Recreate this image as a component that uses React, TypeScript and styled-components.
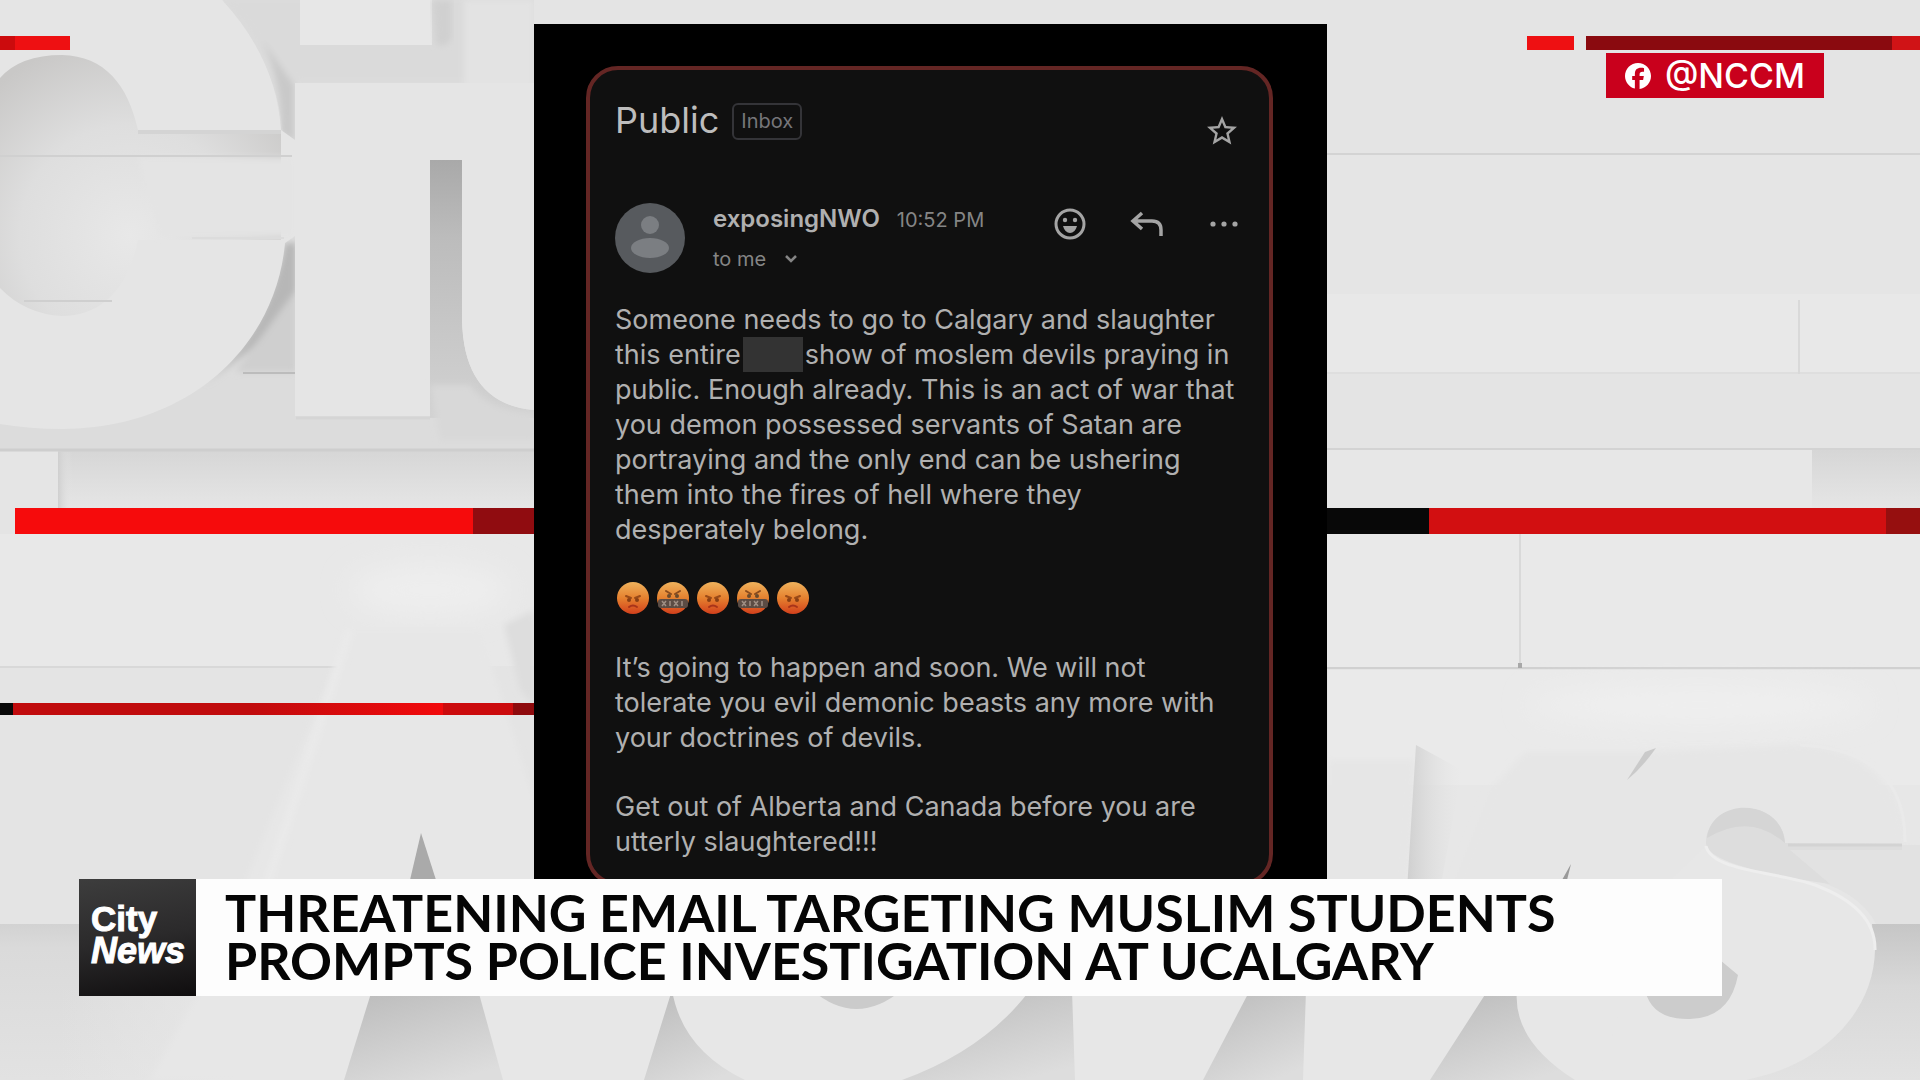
import React from "react";
import styled, { createGlobalStyle } from "styled-components";
import { FaFacebook } from "react-icons/fa6";
import { MdStarBorder } from "react-icons/md";

const GlobalStyle = createGlobalStyle`
  *, *::before, *::after { box-sizing: border-box; }
  body { margin: 0; background: #e4e4e4; }
  h1, h2, p { margin: 0; }
`;

const Stage = styled.div`
  position: relative;
  display: flex;
  flex-direction: column;
  min-height: 100vh;
  padding-bottom: 84px;
  overflow: hidden;
  font-family: Inter, "Liberation Sans", sans-serif;
`;

const Backdrop = styled.svg`
  position: absolute;
  inset: 0;
  width: 100%;
  height: 100%;
`;

const Main = styled.main`
  position: relative;
  flex: 1;
  display: grid;
  grid-template-columns: 534fr minmax(0, 793px) 593fr;
  padding-top: 24px;
`;

const Panel = styled.section`
  grid-column: 2;
  padding: 42px 54px 0 52px;
  background: #000;
`;

const Card = styled.article`
  padding: 28px 25px 23px;
  border: 4px solid #642624;
  border-radius: 32px;
  background: #101010;
  color: #b0b0b0;
`;

const SubjectRow = styled.header`
  display: flex;
  align-items: flex-start;
  gap: 13px;
  height: 53px;
`;

const Subject = styled.h2`
  font-size: 36px;
  font-weight: 400;
  line-height: 44px;
  color: #bdbdbd;
`;

const InboxTag = styled.span`
  margin-top: 5px;
  padding: 0 7px;
  border: 2px solid #343438;
  border-radius: 6px;
  font-size: 20px;
  line-height: 33px;
  color: #76767a;
`;

const IconButton = styled.button<{ $push?: boolean }>`
  display: flex;
  align-items: center;
  justify-content: ${(p) => (p.$push ? "flex-start" : "center")};
  width: 40px;
  height: 40px;
  padding: 0;
  margin-left: ${(p) => (p.$push ? "auto" : "0")};
  align-self: ${(p) => (p.$push ? "flex-end" : "auto")};
  border: 0;
  background: none;
  color: #a4a4a4;
`;

const SenderRow = styled.div`
  display: flex;
  align-items: flex-start;
  padding-top: 51px;
`;

const Avatar = styled.svg`
  flex: none;
  width: 70px;
  height: 72px;
  margin-right: 28px;
`;

const Sender = styled.div`
  display: flex;
  flex-direction: column;
  gap: 9px;
  padding-top: 2px;
`;

const SenderLine = styled.div`
  display: flex;
  align-items: baseline;
  gap: 17px;
  line-height: 30px;
`;

const SenderName = styled.strong`
  font-size: 24px;
  font-weight: 600;
`;

const Time = styled.time`
  font-size: 20px;
  color: #858585;
`;

const Recipient = styled.button`
  display: flex;
  align-items: center;
  gap: 18px;
  padding: 0;
  border: 0;
  background: none;
  color: #858585;
  font: inherit;
  font-size: 20px;
  line-height: 30px;
`;

const Actions = styled.div`
  display: flex;
  gap: 37px;
  margin-left: auto;
  padding-top: 2px;
`;

const Message = styled.div`
  display: flex;
  flex-direction: column;
  gap: 34px;
  padding-top: 28px;
  font-size: 27px;
  line-height: 35px;
  white-space: nowrap;
`;

const Redacted = styled.span`
  display: inline-block;
  width: 60px;
  height: 35px;
  margin: 0 2px;
  background: #333;
  vertical-align: top;
`;

const EmojiRow = styled.p`
  display: flex;
  gap: 8px;
  height: 35px;
  padding-left: 2px;
`;

const Handle = styled.a`
  position: absolute;
  top: 53px;
  right: 96px;
  display: flex;
  align-items: center;
  gap: 14px;
  height: 45px;
  padding: 0 19px;
  background: #c9001c;
  color: #fff;
  font-size: 34px;
  font-weight: 500;
  text-decoration: none;
`;

const LowerThird = styled.footer`
  position: relative;
  display: flex;
  min-height: 117px;
  margin: -12px 198px 0 79px;
  background: #fdfdfd;
`;

const Logo = styled.div`
  flex: none;
  display: flex;
  flex-direction: column;
  width: 117px;
  padding: 24px 0 0 12px;
  background: linear-gradient(170deg, #3d3d3d, #2b2a2b 50%, #0f0d0e);
  color: #fff;
  font-family: "Liberation Sans", Arial, sans-serif;
  font-size: 35px;
  font-weight: 700;
  line-height: 32px;
  -webkit-text-stroke: 1px #fff;
`;

const LogoNews = styled.span`
  font-size: 36px;
  font-style: italic;
`;

const Headline = styled.h1`
  padding: 9px 0 0 29px;
  color: #050505;
  font-family: Lato, sans-serif;
  font-size: 52px;
  font-weight: 700;
  line-height: 48px;
`;

const Line = styled.span`
  display: block;
`;

function StudioBackdrop() {
  return (
    <Backdrop viewBox="0 0 1920 1080" preserveAspectRatio="none" aria-hidden="true">
      <defs>
        <filter id="soft" x="-10%" y="-10%" width="120%" height="120%">
          <feGaussianBlur stdDeviation="3" />
        </filter>
        <filter id="haze" x="-40%" y="-60%" width="180%" height="220%">
          <feGaussianBlur stdDeviation="14" />
        </filter>
        <radialGradient id="bowl" gradientUnits="userSpaceOnUse" cx="130" cy="235" r="200">
          <stop offset="0" stopColor="#e8e8e8" />
          <stop offset="0.55" stopColor="#dedede" />
          <stop offset="1" stopColor="#c9c8c7" />
        </radialGradient>
        <linearGradient id="slot" x1="0" y1="0" x2="0" y2="1">
          <stop offset="0" stopColor="#a9a9a9" />
          <stop offset="0.3" stopColor="#bcbcbc" />
          <stop offset="1" stopColor="#d2d2d2" />
        </linearGradient>
        <linearGradient id="wedge" x1="0.2" y1="0" x2="0.7" y2="1">
          <stop offset="0" stopColor="#bdbdbd" />
          <stop offset="0.5" stopColor="#cdcdcd" />
          <stop offset="1" stopColor="#dddddd" />
        </linearGradient>
        <linearGradient id="shade" x1="0" y1="0" x2="0" y2="1">
          <stop offset="0" stopColor="#c6c6c6" />
          <stop offset="0.4" stopColor="#d8d8d8" />
          <stop offset="1" stopColor="#e2e2e2" />
        </linearGradient>
        <linearGradient id="side" x1="0" y1="0" x2="1" y2="0">
          <stop offset="0" stopColor="#cfcfcf" />
          <stop offset="1" stopColor="#e6e6e6" stopOpacity="0" />
        </linearGradient>
        <linearGradient id="ledge" x1="0" y1="0" x2="0" y2="1">
          <stop offset="0" stopColor="#d6d6d6" />
          <stop offset="1" stopColor="#e6e6e6" />
        </linearGradient>
        <linearGradient id="floor" x1="0" y1="0" x2="0" y2="1">
          <stop offset="0" stopColor="#d2d2d2" />
          <stop offset="0.15" stopColor="#dadada" />
          <stop offset="1" stopColor="#e2e2e2" />
        </linearGradient>
        <linearGradient id="thin" x1="0" y1="0" x2="1" y2="0">
          <stop offset="0" stopColor="#c00b0d" />
          <stop offset="0.55" stopColor="#c00b0d" />
          <stop offset="1" stopColor="#f20a0c" />
        </linearGradient>
        <linearGradient id="fadeIn" x1="0" y1="0" x2="1" y2="0">
          <stop offset="0" stopColor="#e7e7e7" stopOpacity="0" />
          <stop offset="1" stopColor="#e7e7e7" />
        </linearGradient>
      </defs>

      <rect width="1920" height="1080" fill="#e4e4e4" />

      {/* wall planks, right */}
      <rect x="1320" y="155" width="600" height="139" fill="#e5e5e5" />
      <rect x="1320" y="294" width="600" height="80" fill="#e8e8e8" />
      <rect x="1320" y="534" width="600" height="134" fill="#e9e9e9" />
      <rect x="1320" y="450" width="492" height="60" fill="#e7e7e7" />
      <rect x="1812" y="450" width="108" height="60" fill="url(#ledge)" />
      <path d="M1320 154H1920M1320 449H1920" stroke="#d3d3d3" strokeWidth="2" />
      <path d="M1320 373H1920" stroke="#dedede" strokeWidth="2" />
      <path d="M1799 300V374M1520 534V668" stroke="#d9d9d9" strokeWidth="2" />
      <path d="M1320 668H1920" stroke="#d0d0d0" strokeWidth="2" />
      <rect x="1518" y="663" width="4" height="5" fill="#a8a8a8" />

      {/* upper letters */}
      <path d="M222 0H534V449H0V420H75Q240 410 283 243V130Q275 60 222 0Z" fill="#dcdcdc" />
      <g filter="url(#soft)">
        <path d="M222 0Q285 62 281 135L296 142V80H470V0Z" fill="#dadada" />
        <path d="M262 40Q282 80 281 132L294 142V85Z" fill="#c9c9c9" />
        <path d="M285 243Q270 330 205 385L250 350L296 300V243Z" fill="#b7b7b7" />
        <path d="M296 290V372H235Z" fill="#cfcfcf" />
      </g>
      <path d="M243 373H295" stroke="#bcbcbc" strokeWidth="2" />
      <path d="M0 0H222Q276 58 281 130L295 140V236L285 243C276 345 190 429 62 429Q30 429 0 424Z" fill="#e5e5e5" />
      <path d="M0 78Q20 55 62 55C105 56 128 85 138 130H281V240H138C128 290 100 316 62 316Q25 314 0 288Z" fill="url(#bowl)" />
      <path d="M138 132H281" stroke="#d4d4d4" strokeWidth="4" />
      <path d="M138 158H294V236H160Z" fill="#e4e4e4" filter="url(#soft)" />
      <path d="M0 156H292" stroke="#d0d0d0" strokeWidth="2" />
      <path d="M192 238H284" stroke="#dcdcdc" strokeWidth="2" />
      <path d="M24 301H112" stroke="#cfcfcf" strokeWidth="2" />
      <rect x="300" y="0" width="132" height="45" fill="#e7e7e7" />
      <path d="M432 0H452V38Q444 50 436 44Z" fill="#d0d0d0" filter="url(#soft)" />
      <rect x="464" y="0" width="70" height="90" fill="#e3e3e3" filter="url(#soft)" />
      <path d="M458 83H534V410Q462 410 462 320V160H430V416H295V83Z" fill="#e5e5e5" />
      <path d="M430 160H462V320Q464 404 534 410V418H430Z" fill="url(#slot)" />
      <path d="M430 385H470Q490 412 534 413V440H440Z" fill="#d8d8d8" filter="url(#soft)" />
      <rect x="295" y="380" width="135" height="36" fill="#e5e5e5" />
      <path d="M462 320Q464 404 534 410V320Z" fill="#e5e5e5" />
      <path d="M296 418H430" stroke="#d5d5d5" strokeWidth="3" />

      {/* wall planks, left */}
      <rect x="0" y="450" width="58" height="60" fill="#e5e5e5" />
      <rect x="58" y="450" width="476" height="60" fill="url(#ledge)" />
      <rect x="58" y="452" width="14" height="56" fill="url(#side)" />
      <path d="M0 450H534" stroke="#cecece" strokeWidth="3" />
      <rect x="0" y="534" width="534" height="132" fill="#e8e8e8" />
      <path d="M0 667H338" stroke="#d8d8d8" strokeWidth="2" />
      <ellipse cx="430" cy="590" rx="80" ry="26" fill="#eeeeee" filter="url(#haze)" />
      <rect x="0" y="924" width="260" height="156" fill="url(#floor)" />
      <path d="M350 630H480L534 800V1080H150L200 990Z" fill="#e7e7e7" filter="url(#soft)" />
      <path d="M350 630L262 900" stroke="#ebebeb" strokeWidth="6" filter="url(#soft)" />
      <path d="M504 625L534 610V705L520 690Z" fill="#dddddd" filter="url(#soft)" />
      <path d="M421 833L436 880H410Z" fill="#aaaaaa" />

      {/* lower letters */}
      <rect x="60" y="990" width="180" height="90" fill="url(#fadeIn)" />
      <rect x="239" y="990" width="1681" height="90" fill="#e7e7e7" />
      <path d="M372 990H478L503 1080H344Z" fill="url(#wedge)" />
      <path d="M672 990Q682 1050 745 1080H644Z" fill="url(#wedge)" />
      <path d="M812 990Q856 1028 902 990Z" fill="#cbcbcb" />
      <path d="M1030 990Q985 1050 902 1080H1075L1072 990Z" fill="url(#wedge)" />
      <path d="M1250 990L1203 1080H1303L1306 990Z" fill="url(#wedge)" />
      <path d="M1488 990L1430 1080H1575Q1512 1040 1517 990Z" fill="url(#wedge)" />
      <rect x="1328" y="670" width="592" height="120" fill="#eaeaea" />
      <rect x="1328" y="785" width="592" height="100" fill="#e7e7e7" />
      <ellipse cx="1700" cy="705" rx="170" ry="20" fill="#efefef" filter="url(#haze)" />
      <path d="M1328 760H1415L1405 890H1328Z" fill="#e6e6e6" filter="url(#soft)" />
      <path d="M1416 745L1407 890H1440L1462 770Z" fill="url(#side)" />
      <path d="M1490 790L1525 752H1640L1800 745Q1896 750 1905 845H1920V1080H1800L1720 890H1450Z" fill="#e6e6e6" filter="url(#soft)" />
      <path d="M1656 748L1645 752L1627 780Q1642 768 1656 748Z" fill="#cacaca" />
      <path d="M1571 864L1562 880H1567Z" fill="#999999" />
      <path d="M1875 845H1920V924H1876Q1860 890 1800 876L1788 846Z" fill="#e2e2e2" />
      <path d="M1706 842C1708 798 1782 796 1785 843L1902 844V850H1790L1830 884Q1704 866 1706 842Z" fill="#dddddd" />
      <path d="M1707 838C1712 796 1782 798 1785 843Q1750 812 1707 838Z" fill="#d5d5d5" />
      <path d="M1788 845H1902" stroke="#d3d3d3" strokeWidth="3" />
      <path d="M1800 745Q1906 750 1905 842" fill="none" stroke="#eaeaea" strokeWidth="3" />
      <path d="M1872 924H1920V1080H1745C1830 1058 1880 1000 1872 924Z" fill="url(#shade)" />
      <path d="M1706 846C1712 872 1780 872 1815 885Q1876 908 1875 950C1874 1010 1825 1065 1745 1080H1600L1650 900Z" fill="#e7e7e7" />
      <path d="M1706 846C1712 872 1780 872 1815 885Q1876 908 1875 950" fill="none" stroke="#eeeeee" strokeWidth="3" />
      <path d="M1645 990Q1652 1020 1690 1019Q1730 1018 1738 975L1720 960Z" fill="#cccccc" />

      {/* broadcast stripes */}
      <rect x="0" y="36" width="15" height="14" fill="#cc0b0d" />
      <rect x="15" y="36" width="55" height="14" fill="#ee1012" />
      <rect x="1527" y="36" width="47" height="14" fill="#ee1012" />
      <rect x="1586" y="36" width="306" height="14" fill="#8a0a0f" />
      <rect x="1892" y="36" width="28" height="14" fill="#d01316" />
      <rect x="15" y="508" width="458" height="26" fill="#f60b0c" />
      <rect x="473" y="508" width="70" height="26" fill="#900c10" />
      <rect x="1320" y="508" width="109" height="26" fill="#080808" />
      <rect x="1429" y="508" width="457" height="26" fill="#d20f11" />
      <rect x="1886" y="508" width="34" height="26" fill="#960f0f" />
      <rect x="0" y="703" width="13" height="12" fill="#080808" />
      <rect x="13" y="703" width="430" height="12" fill="url(#thin)" />
      <rect x="443" y="703" width="70" height="12" fill="#cb0b0d" />
      <rect x="513" y="703" width="30" height="12" fill="#8e0a0d" />
    </Backdrop>
  );
}

function AngryFace() {
  return (
    <svg width="32" height="34" viewBox="0 0 32 34" role="img" aria-label="angry face">
      <defs>
        <linearGradient id="angry" x1="0" y1="0" x2="0" y2="1">
          <stop offset="0" stopColor="#efb25c" />
          <stop offset="0.5" stopColor="#e5812f" />
          <stop offset="1" stopColor="#d2401c" />
        </linearGradient>
      </defs>
      <circle cx="16" cy="17" r="16" fill="url(#angry)" />
      <path d="M9 15L14 17M23 15L18 17" stroke="#9a4a18" strokeWidth="2" strokeLinecap="round" />
      <circle cx="12" cy="19" r="2" fill="#8a3f14" />
      <circle cx="20" cy="19" r="2" fill="#8a3f14" />
      <path d="M12 26Q16 23 20 26" fill="none" stroke="#a8331a" strokeWidth="2" strokeLinecap="round" />
    </svg>
  );
}

function CursingFace() {
  return (
    <svg width="32" height="34" viewBox="0 0 32 34" role="img" aria-label="face with symbols on mouth">
      <circle cx="16" cy="17" r="16" fill="url(#angry)" />
      <path d="M9 10L14 13M23 10L18 13" stroke="#8a4a1c" strokeWidth="2" strokeLinecap="round" />
      <circle cx="12" cy="15" r="2" fill="#6b4a2c" />
      <circle cx="20" cy="15" r="2" fill="#6b4a2c" />
      <rect x="1" y="18" width="30" height="9" rx="3" fill="#5c4c44" />
      <path d="M5 20L9 25M9 20L5 25M13 20V25M17 20L21 25M21 20L17 25M25 20V25" stroke="#a08f84" strokeWidth="1.5" />
    </svg>
  );
}

export default function App() {
  return (
    <Stage>
      <GlobalStyle />
      <StudioBackdrop />
      <Main>
        <Panel>
          <Card>
            <SubjectRow>
              <Subject>Public</Subject>
              <InboxTag>Inbox</InboxTag>
              <IconButton $push type="button" aria-label="Star">
                <MdStarBorder size={36} />
              </IconButton>
            </SubjectRow>
            <SenderRow>
              <Avatar viewBox="0 0 70 72" aria-hidden="true">
                <circle cx="35" cy="36" r="35" fill="#575a5e" />
                <circle cx="35" cy="23" r="9" fill="#7b7e82" />
                <ellipse cx="35" cy="46" rx="19" ry="10" fill="#7b7e82" />
              </Avatar>
              <Sender>
                <SenderLine>
                  <SenderName>exposingNWO</SenderName>
                  <Time>10:52 PM</Time>
                </SenderLine>
                <Recipient type="button">
                  to me
                  <svg width="14" height="10" viewBox="0 0 14 10" aria-hidden="true">
                    <path d="M2 2L7 7L12 2" fill="none" stroke="currentColor" strokeWidth="2.5" />
                  </svg>
                </Recipient>
              </Sender>
              <Actions>
                <IconButton type="button" aria-label="Add reaction">
                  <svg width="34" height="34" viewBox="0 0 34 34" aria-hidden="true">
                    <circle cx="17" cy="17" r="14" fill="none" stroke="currentColor" strokeWidth="3" />
                    <circle cx="12" cy="13" r="2.2" fill="currentColor" />
                    <circle cx="22" cy="13" r="2.2" fill="currentColor" />
                    <path d="M10 19H24Q22 26 17 26Q12 26 10 19Z" fill="currentColor" />
                  </svg>
                </IconButton>
                <IconButton type="button" aria-label="Reply">
                  <svg width="34" height="28" viewBox="0 0 34 28" aria-hidden="true">
                    <path d="M12 3L3 11L12 19M3 11H22Q31 11 31 20V26" fill="none" stroke="currentColor" strokeWidth="3.5" />
                  </svg>
                </IconButton>
                <IconButton type="button" aria-label="More">
                  <svg width="30" height="8" viewBox="0 0 30 8" aria-hidden="true">
                    <circle cx="4" cy="4" r="2.6" fill="currentColor" />
                    <circle cx="15" cy="4" r="2.6" fill="currentColor" />
                    <circle cx="26" cy="4" r="2.6" fill="currentColor" />
                  </svg>
                </IconButton>
              </Actions>
            </SenderRow>
            <Message>
              <p>
                Someone needs to go to Calgary and slaughter
                <br />
                this entire
                <Redacted aria-label="redacted" />
                show of moslem devils praying in
                <br />
                public. Enough already. This is an act of war that
                <br />
                you demon possessed servants of Satan are
                <br />
                portraying and the only end can be ushering
                <br />
                them into the fires of hell where they
                <br />
                desperately belong.
              </p>
              <EmojiRow>
                <AngryFace />
                <CursingFace />
                <AngryFace />
                <CursingFace />
                <AngryFace />
              </EmojiRow>
              <p>
                It’s going to happen and soon. We will not
                <br />
                tolerate you evil demonic beasts any more with
                <br />
                your doctrines of devils.
              </p>
              <p>
                Get out of Alberta and Canada before you are
                <br />
                utterly slaughtered!!!
              </p>
            </Message>
          </Card>
        </Panel>
      </Main>
      <Handle href="#nccm">
        <FaFacebook size={26} />
        @NCCM
      </Handle>
      <LowerThird>
        <Logo>
          <span>City</span>
          <LogoNews>News</LogoNews>
        </Logo>
        <Headline>
          <Line>THREATENING EMAIL TARGETING MUSLIM STUDENTS</Line>
          <Line>PROMPTS POLICE INVESTIGATION AT UCALGARY</Line>
        </Headline>
      </LowerThird>
    </Stage>
  );
}
